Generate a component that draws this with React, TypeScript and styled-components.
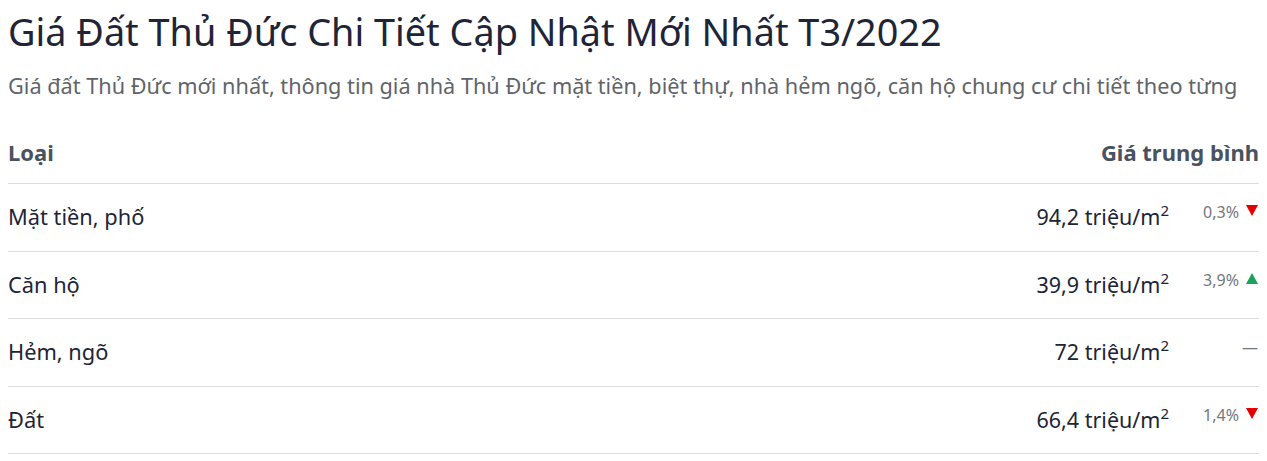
import React from 'react'
import styled, { createGlobalStyle } from 'styled-components'

const GlobalStyle = createGlobalStyle`
    body {
        margin: 0;
        background: #fff;
        font-family: "Noto Sans", "Open Sans", sans-serif;
    }
`

type Trend = 'down' | 'up' | 'flat'

const rows: { name: string; price: string; change?: string; trend: Trend }[] = [
    { name: 'Mặt tiền, phố', price: '94,2', change: '0,3%', trend: 'down' },
    { name: 'Căn hộ', price: '39,9', change: '3,9%', trend: 'up' },
    { name: 'Hẻm, ngõ', price: '72', trend: 'flat' },
    { name: 'Đất', price: '66,4', change: '1,4%', trend: 'down' },
]

function TrendArrow({ trend }: { trend: Trend }) {
    const up = trend === 'up'
    return (
        <Arrow width="12" height="11" viewBox="0 0 12 11">
            {up ? (
                <polygon points="6,0 12,11 0,11" fill="#1aa25a" />
            ) : (
                <polygon points="0,0 12,0 6,11" fill="#e60000" />
            )}
        </Arrow>
    )
}

function App() {
    return (
        <React.Fragment>
            <GlobalStyle />
            <Page>
                <Title>Giá Đất Thủ Đức Chi Tiết Cập Nhật Mới Nhất T3/2022</Title>
                <Lead>
                    Giá đất Thủ Đức mới nhất, thông tin giá nhà Thủ Đức mặt tiền, biệt thự, nhà hẻm ngõ, căn hộ chung cư chi tiết theo từng
                </Lead>
                <PriceTable>
                    <thead>
                        <tr>
                            <HeadCell align="left">Loại</HeadCell>
                            <HeadCell align="right" colSpan={2}>Giá trung bình</HeadCell>
                        </tr>
                    </thead>
                    <tbody>
                        {rows.map((r) => (
                            <Row key={r.name}>
                                <Cell>{r.name}</Cell>
                                <PriceCell>
                                    {r.price} triệu/m<sup>2</sup>
                                </PriceCell>
                                <ChangeCell>
                                    {r.trend === 'flat' ? (
                                        <Dash>—</Dash>
                                    ) : (
                                        <Change>
                                            {r.change}
                                            <TrendArrow trend={r.trend} />
                                        </Change>
                                    )}
                                </ChangeCell>
                            </Row>
                        ))}
                    </tbody>
                </PriceTable>
            </Page>
        </React.Fragment>
    )
}

export default App

const Page = styled.div`
    padding: 0 8px;
`

const Title = styled.h1`
    margin: 0;
    padding-top: 9px;
    font-size: 37.8px;
    font-weight: 400;
    line-height: 46px;
    color: #212437;
    white-space: nowrap;
`

const Lead = styled.p`
    margin: 16px 0 0;
    font-size: 21.7px;
    line-height: 30px;
    color: #5f646b;
    white-space: nowrap;
`

const PriceTable = styled.table`
    width: 100%;
    margin-top: 20px;
    border-collapse: collapse;
`

const HeadCell = styled.th<{ align: string }>`
    text-align: ${(p) => p.align};
    padding: 17px 0;
    font-size: 22px;
    line-height: 28px;
    font-weight: 700;
    color: #4a5260;
    border-bottom: 1px solid #dcdcdc;
`

const Row = styled.tr`
    height: 67.6px;
`

const Cell = styled.td`
    padding: 0;
    font-size: 21.8px;
    line-height: 30px;
    color: #212437;
    border-bottom: 1px solid #dcdcdc;
`

const PriceCell = styled(Cell)`
    text-align: right;
    font-size: 21.5px;

    sup {
        font-size: 15px;
        line-height: 0;
        vertical-align: 9px;
    }
`

const ChangeCell = styled(Cell)`
    width: 89px;
    text-align: right;
    vertical-align: top;
    padding-top: 17px;
    padding-right: 1px;
    font-size: 16px;
    line-height: 22px;
    color: #73777e;
`

const Change = styled.span`
    display: inline-flex;
    align-items: center;
    gap: 7px;
`

const Arrow = styled.svg`
    display: block;
    margin-top: -3px;
`

const Dash = styled.span`
    color: #73777e;
`
